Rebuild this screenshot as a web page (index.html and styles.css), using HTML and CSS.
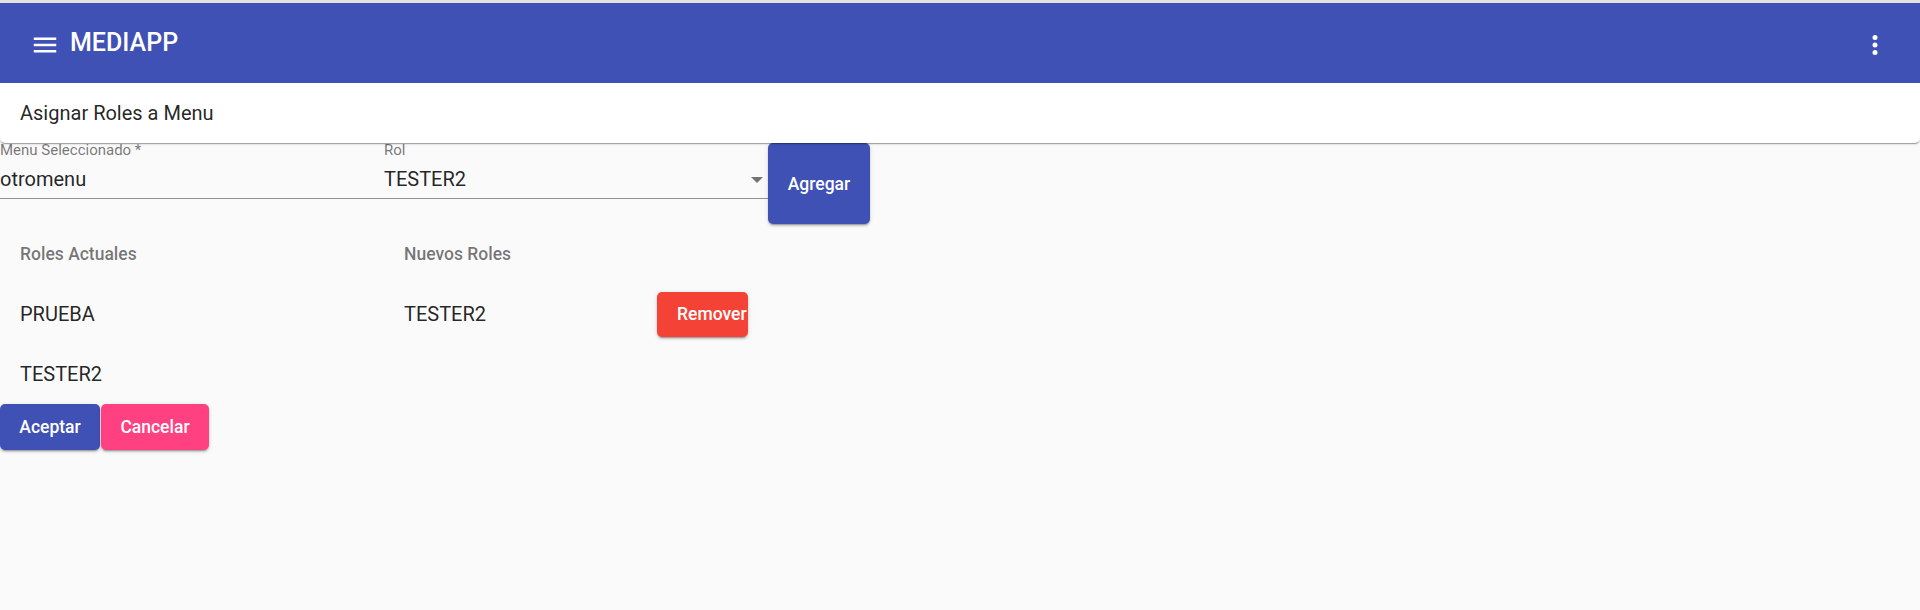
FILE: index.html
```html
<!DOCTYPE html>
<html lang="es">
<head>
<meta charset="utf-8">
<title>MEDIAPP</title>
<link rel="stylesheet" href="styles.css">
</head>
<body>
<div class="topline"></div>
<header class="toolbar">
  <button class="icon-btn" type="button" aria-label="menu">
    <svg viewBox="0 0 24 24" width="30" height="30"><path d="M3 18h18v-2H3v2zm0-5h18v-2H3v2zm0-7v2h18V6H3z"/></svg>
  </button>
  <span class="title">MEDIAPP</span>
  <span class="spacer"></span>
  <button class="icon-btn" type="button" aria-label="more">
    <svg viewBox="0 0 24 24" width="30" height="30"><circle cx="12" cy="6" r="2"/><circle cx="12" cy="12" r="2"/><circle cx="12" cy="18" r="2"/></svg>
  </button>
</header>
<main class="page">
  <div class="card">Asignar Roles a Menu</div>
  <form class="form-row">
    <div class="field">
      <label class="f-label">Menu Seleccionado *</label>
      <div class="f-value">otromenu</div>
    </div>
    <div class="field">
      <label class="f-label">Rol</label>
      <div class="f-value select"><span>TESTER2</span><span class="arrow"></span></div>
    </div>
    <button class="btn primary agregar" type="button">Agregar</button>
  </form>
  <section class="roles">
    <div class="col">
      <div class="subheader">Roles Actuales</div>
      <div class="item">PRUEBA</div>
      <div class="item">TESTER2</div>
    </div>
    <div class="col">
      <div class="subheader">Nuevos Roles</div>
      <div class="item"><span class="name">TESTER2</span><button class="btn warn remover" type="button">Remover</button></div>
    </div>
  </section>
  <div class="actions">
    <button class="btn primary aceptar" type="button">Aceptar</button>
    <button class="btn accent cancelar" type="button">Cancelar</button>
  </div>
</main>
</body>
</html>
```
FILE: styles.css
```css
html, body {
  margin: 0;
  padding: 0;
}
body {
  background: #fafafa;
  font-family: Roboto, "Noto Sans", Arial, sans-serif;
  color: rgba(0, 0, 0, 0.87);
  height: 610px;
  overflow: hidden;
}
.topline {
  height: 3px;
  background: #e2e2e2;
}
.toolbar {
  height: 80px;
  background: #3f51b5;
  color: #fff;
  display: flex;
  align-items: center;
  padding: 0 20px;
  position: relative;
  z-index: 2;
}
.icon-btn {
  width: 50px;
  height: 50px;
  margin-top: 3px;
  padding: 0;
  border: none;
  background: none;
  display: flex;
  align-items: center;
  justify-content: center;
  fill: #fff;
}
.title {
  font-size: 25px;
  font-weight: 500;
  line-height: 32px;
  letter-spacing: 0;
}
.spacer {
  flex: 1;
}
.card {
  position: relative;
  z-index: 1;
  background: #fff;
  height: 20px;
  padding: 20px;
  font-size: 20px;
  line-height: 20px;
  border-radius: 0 0 5px 5px;
  box-shadow: 0 2px 1px -1px rgba(0,0,0,.2), 0 1px 1px 0 rgba(0,0,0,.14), 0 1px 3px 0 rgba(0,0,0,.12);
}
.form-row {
  display: flex;
  align-items: stretch;
  margin: 0;
}
.field {
  width: 384px;
  display: flex;
  flex-direction: column;
  padding-bottom: 25px;
}
.f-label {
  font-size: 15px;
  line-height: 15px;
  color: rgba(0, 0, 0, 0.54);
}
.f-value {
  margin-top: 11px;
  font-size: 20px;
  line-height: 20px;
  padding-bottom: 9px;
  border-bottom: 1px solid rgba(0, 0, 0, 0.42);
}
.select {
  display: flex;
  align-items: center;
  justify-content: space-between;
  padding-right: 5px;
}
.arrow {
  width: 0;
  height: 0;
  border-left: 6px solid transparent;
  border-right: 6px solid transparent;
  border-top: 6px solid rgba(0, 0, 0, 0.54);
  margin-top: 2px;
}
.btn {
  border: none;
  border-radius: 5px;
  font-family: Roboto, "Noto Sans", Arial, sans-serif;
  font-size: 17.5px;
  font-weight: 500;
  color: #fff;
  padding: 0 20px;
  height: 45px;
  cursor: pointer;
  box-shadow: 0 3px 1px -2px rgba(0,0,0,.2), 0 2px 2px 0 rgba(0,0,0,.14), 0 1px 5px 0 rgba(0,0,0,.12);
}
.primary { background: #3f51b5; }
.accent { background: #ff4081; }
.warn { background: #f44336; }
.agregar {
  width: 102px;
  height: auto;
  padding: 0;
}
.roles {
  display: flex;
}
.col {
  width: 384px;
}
.subheader {
  height: 60px;
  display: flex;
  align-items: center;
  padding-left: 20px;
  font-size: 17.5px;
  font-weight: 500;
  color: rgba(0, 0, 0, 0.54);
}
.item {
  height: 60px;
  display: flex;
  align-items: center;
  padding-left: 20px;
  font-size: 20px;
}
.name {
  width: 253px;
  flex: none;
}
.remover {
  width: 91px;
  flex: none;
  padding: 0 0 0 20px;
  text-align: left;
  white-space: nowrap;
  overflow: hidden;
}
.actions {
  display: flex;
  gap: 1px;
}
.actions .btn {
  height: 46px;
  padding: 0;
  flex: none;
}
.aceptar {
  width: 100px;
}
.cancelar {
  width: 108px;
}
```
